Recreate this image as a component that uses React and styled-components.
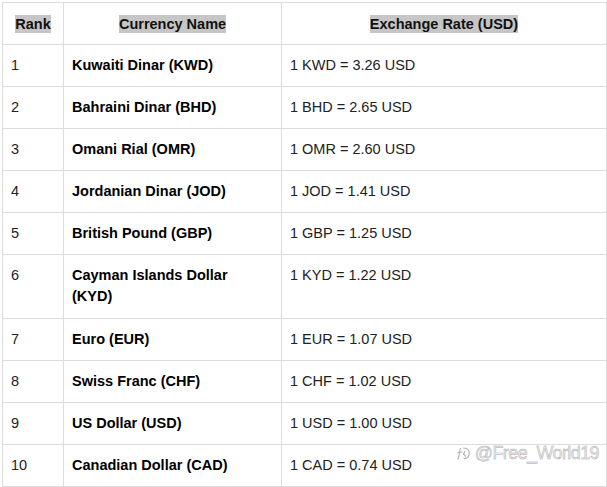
import React from "react";
import styled, { createGlobalStyle } from "styled-components";

const Global = createGlobalStyle`
  html, body { margin: 0; padding: 0; background: #fff; }
  body { font-family: "Liberation Sans", Arial, sans-serif; }
`;

const Page = styled.div`
  position: relative;
  width: 607px;
  height: 487px;
  padding: 2px 0 0 2px;
  box-sizing: border-box;
  overflow: hidden;
`;

const Table = styled.table`
  border-collapse: collapse;
  table-layout: fixed;
  width: 604px;
  font-size: 14.5px;
  color: #111;
`;

const Th = styled.th`
  border: 1px solid #dcdcdc;
  height: 42px;
  box-sizing: border-box;
  padding: 0 8px;
  text-align: center;
  vertical-align: middle;
  font-weight: bold;
  line-height: 20px;
`;

const Highlight = styled.span`
  background: #c6c6c6;
  padding: 1px 0;
`;

const Td = styled.td`
  border: 1px solid #dcdcdc;
  box-sizing: border-box;
  padding: 10px 12px 10px 8px;
  vertical-align: top;
  line-height: 21px;
  height: ${(p) => (p.$tall ? "64px" : "auto")};
  font-weight: ${(p) => (p.$bold ? "bold" : "normal")};
  color: ${(p) => (p.$bold ? "#000" : "#222")};
`;

const Watermark = styled.div`
  position: absolute;
  right: 8px;
  bottom: 23px;
  display: flex;
  align-items: center;
  gap: 4px;
  font-family: "Liberation Sans", Arial, sans-serif;
  font-size: 18px;
  color: #ececec;
  -webkit-text-stroke: 0.45px #a8a8a8;
  letter-spacing: -0.6px;
`;

const rows = [
  ["1", "Kuwaiti Dinar (KWD)", "1 KWD = 3.26 USD"],
  ["2", "Bahraini Dinar (BHD)", "1 BHD = 2.65 USD"],
  ["3", "Omani Rial (OMR)", "1 OMR = 2.60 USD"],
  ["4", "Jordanian Dinar (JOD)", "1 JOD = 1.41 USD"],
  ["5", "British Pound (GBP)", "1 GBP = 1.25 USD"],
  ["6", "Cayman Islands Dollar (KYD)", "1 KYD = 1.22 USD"],
  ["7", "Euro (EUR)", "1 EUR = 1.07 USD"],
  ["8", "Swiss Franc (CHF)", "1 CHF = 1.02 USD"],
  ["9", "US Dollar (USD)", "1 USD = 1.00 USD"],
  ["10", "Canadian Dollar (CAD)", "1 CAD = 0.74 USD"],
];

export default function App() {
  return (
    <>
      <Global />
      <Page>
        <Table>
          <colgroup>
            <col style={{ width: 61 }} />
            <col style={{ width: 218 }} />
            <col style={{ width: 325 }} />
          </colgroup>
          <thead>
            <tr>
              <Th><Highlight>Rank</Highlight></Th>
              <Th><Highlight>Currency Name</Highlight></Th>
              <Th><Highlight>Exchange Rate (USD)</Highlight></Th>
            </tr>
          </thead>
          <tbody>
            {rows.map((r) => {
              const tall = r[0] === "6";
              return (
                <tr key={r[0]}>
                  <Td $tall={tall}>{r[0]}</Td>
                  <Td $tall={tall} $bold>{r[1]}</Td>
                  <Td $tall={tall}>{r[2]}</Td>
                </tr>
              );
            })}
          </tbody>
        </Table>
        <Watermark>
          <svg width="15" height="15" viewBox="0 0 15 15" fill="none" stroke="#b4b4b4" strokeWidth="1.2" strokeLinecap="round">
            <path d="M4.5 2.5 C3.5 5 3.5 9 2 13" />
            <path d="M2 6.5 L6 6" />
            <path d="M7.5 2 C12 2 14 5 13 9 C12 12 9.5 13 8 12.5" />
            <path d="M9 5.5 L7.5 8 L9.5 10" />
          </svg>
          <span>@Free_World19</span>
        </Watermark>
      </Page>
    </>
  );
}
